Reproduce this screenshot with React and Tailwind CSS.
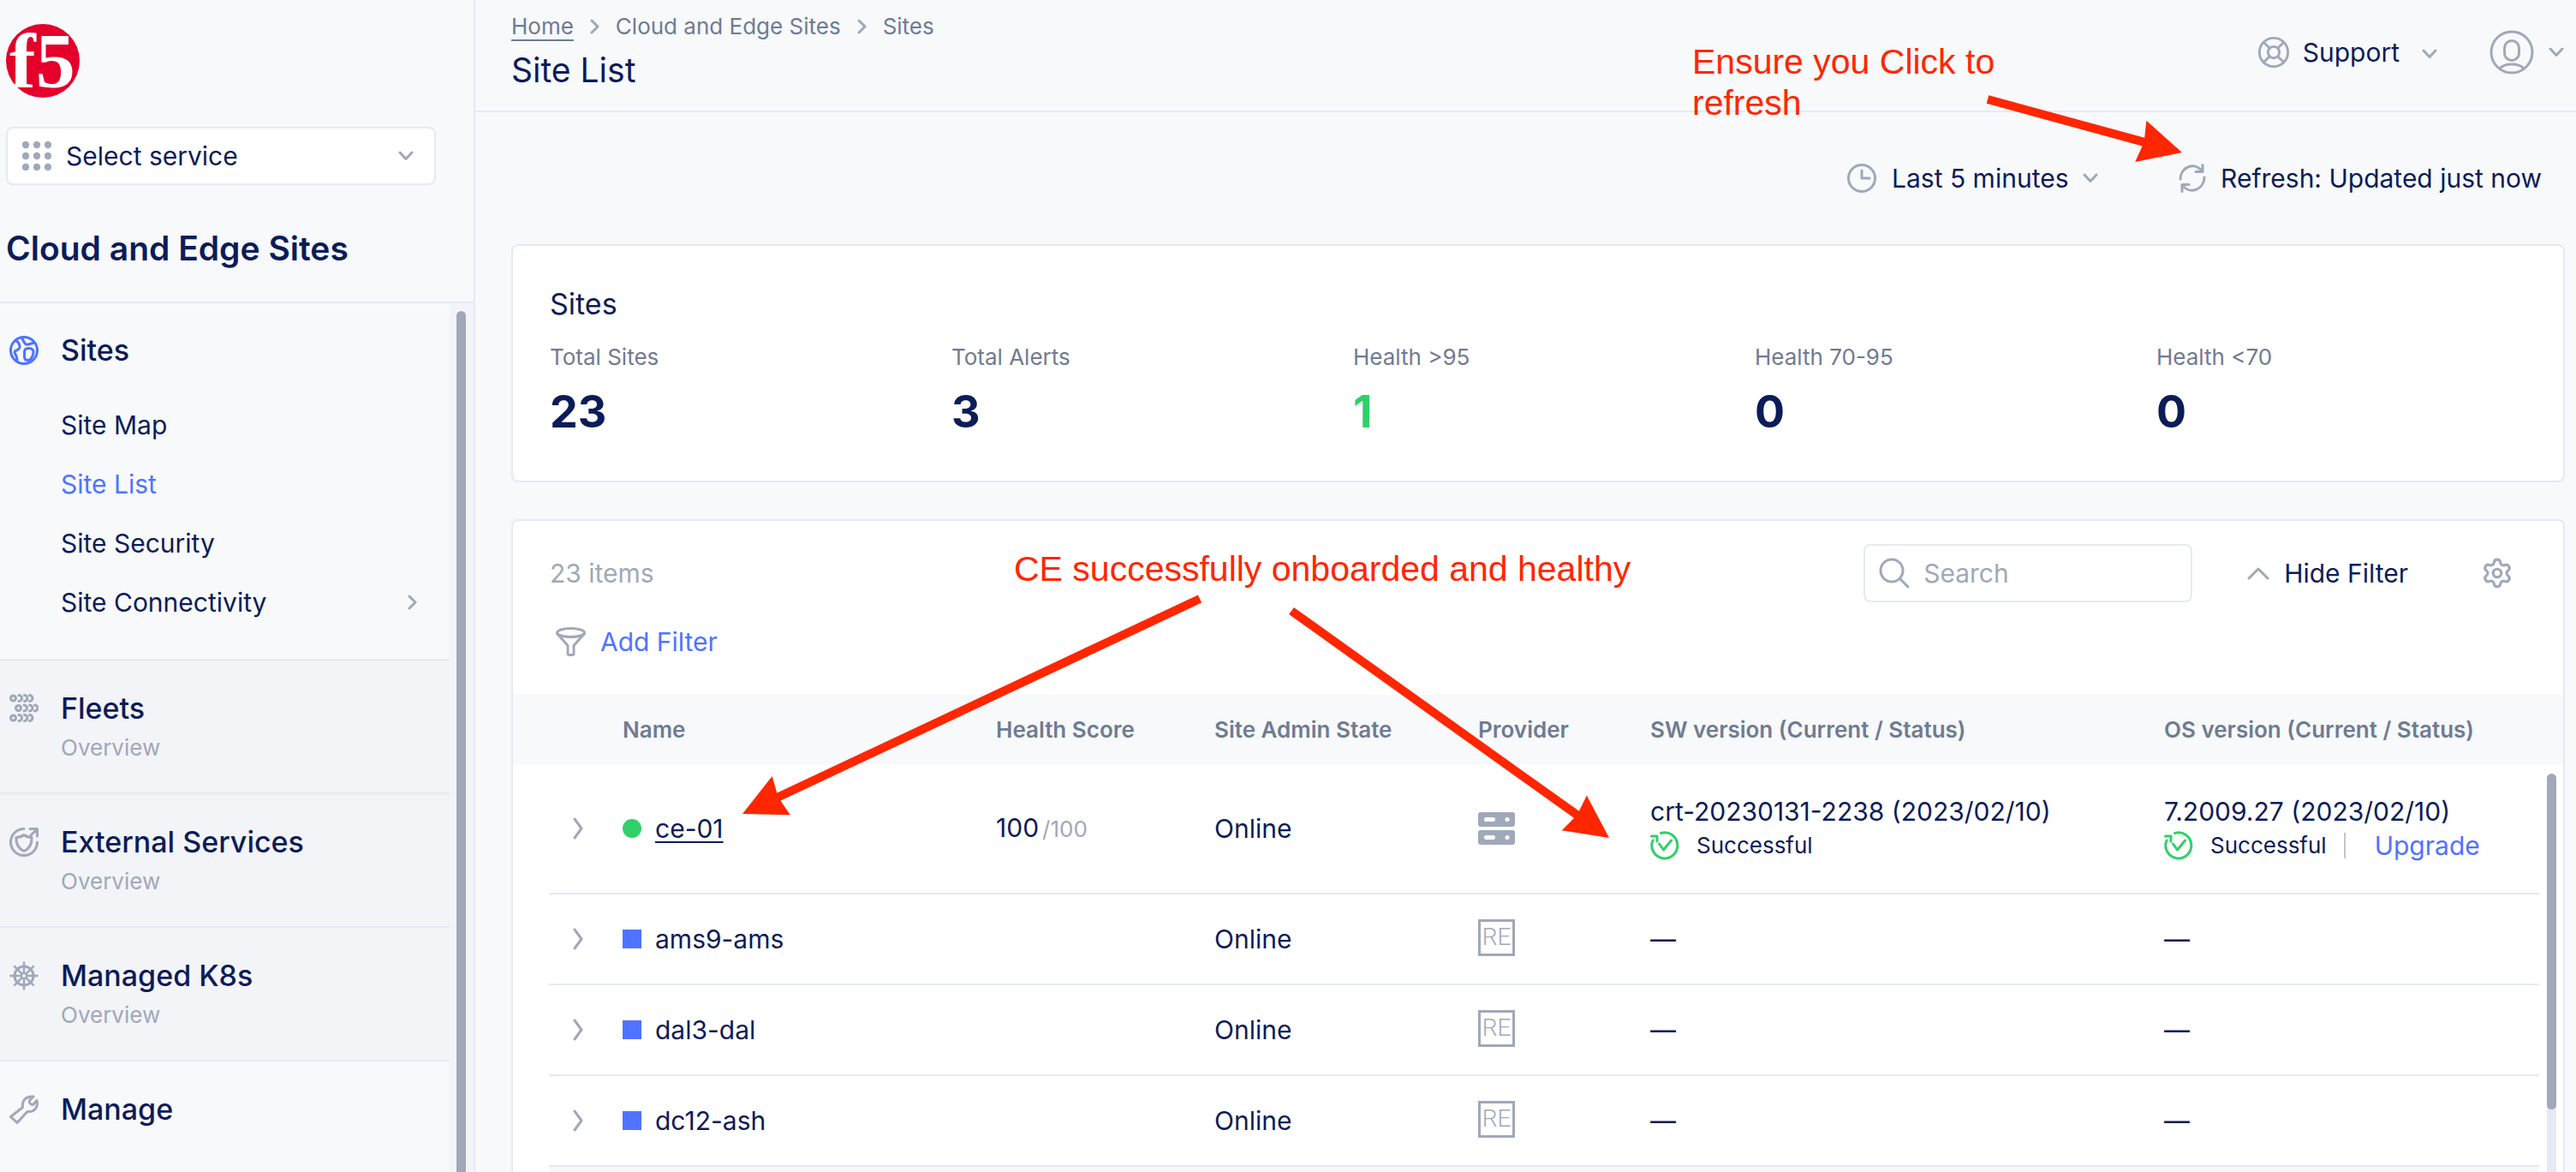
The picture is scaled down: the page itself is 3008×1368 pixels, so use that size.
import React from "react";
import clsx from "clsx";
import { LifeBuoy, Settings } from "lucide-react";

const SERVICES = [
    { title: "Fleets", icon: FleetIcon },
    { title: "External Services", icon: ExternalIcon },
    { title: "Managed K8s", icon: WheelIcon },
];

const SITE_LINKS = [
    { label: "Site Map" },
    { label: "Site List", active: true },
    { label: "Site Security" },
    { label: "Site Connectivity", nested: true },
];

const STATS = [
    { label: "Total Sites", value: 23 },
    { label: "Total Alerts", value: 3 },
    { label: "Health >95", value: 1, good: true },
    { label: "Health 70-95", value: 0 },
    { label: "Health <70", value: 0 },
];

const SITES = [
    {
        name: "ce-01",
        health: 100,
        state: "Online",
        sw: "crt-20230131-2238 (2023/02/10)",
        os: "7.2009.27 (2023/02/10)",
    },
    { name: "ams9-ams", state: "Online" },
    { name: "dal3-dal", state: "Online" },
    { name: "dc12-ash", state: "Online" },
];

function Icon({ w = 34, h = 34, className, children }) {
    return (
        <svg
            width={w}
            height={h}
            viewBox={`0 0 ${w} ${h}`}
            fill="none"
            stroke="currentColor"
            strokeWidth="3"
            strokeLinecap="round"
            strokeLinejoin="round"
            aria-hidden="true"
            className={clsx("shrink-0", className)}
        >
            {children}
        </svg>
    );
}

function ChevronDown({ className }) {
    return (
        <Icon w={18} h={12} className={clsx("text-[#a0a8b9]", className)}>
            <path d="M2 2l7 7.5L16 2" />
        </Icon>
    );
}

function ChevronRight({ className }) {
    return (
        <Icon w={11} h={18} className={clsx("text-[#a0a8b9]", className)}>
            <path d="M2 2l7 7-7 7" />
        </Icon>
    );
}

function Logo() {
    return (
        <svg width="86" height="86" viewBox="0 0 86 86" role="img" aria-label="f5" className="overflow-visible">
            <circle cx="43" cy="43" r="43" fill="#e4002b" />
            <text
                x="4"
                y="74"
                fontSize="92"
                fontWeight="700"
                fill="#fff"
                className="font-['Liberation_Serif',serif]"
            >
                f5
            </text>
        </svg>
    );
}

function DotsIcon() {
    return (
        <Icon className="text-[#a0a8b9]">
            {[4, 17, 30].map((y) => [4, 17, 30].map((x) => (
                <circle key={x + "-" + y} cx={x} cy={y} r="4.2" fill="currentColor" stroke="none" />
            )))}
        </Icon>
    );
}

function GlobeIcon() {
    return (
        <Icon className="text-[#4f73ff]">
            <circle cx="17" cy="17" r="15.5" />
            <path d="M7 5.500c3 1 4.500 3.500 5 6.500s-1.500 4-4 5-2.500 2.500-1 4.500 2 4.500 2 8" />
            <path d="M14.500 2.500l3 5.500c1 2 2.500 2.500 4.500 2l7-2" />
            <path d="M17.500 19c0-3 2-4.500 5-4.500s6 1.500 5.500 5-2.500 9-6 9-4.500-1.500-4.500-4z" />
        </Icon>
    );
}

function FleetIcon() {
    return (
        <Icon className="text-[#a0a8b9]">
            {[[0, 5], [6, 16.5], [0, 28]].map(([x, y]) => (
                <g key={y}>
                    <circle cx={x + 4.5} cy={y} r="3" />
                    <path d={`M${x + 11} ${y - 3.5}a3.500 3.500 0 0 1 0 7M${x + 17.5} ${y - 3.5}a3.500 3.500 0 0 1 0 7M${x + 23.5} ${y - 3.5}a3.500 3.500 0 0 1 0 7`} />
                </g>
            ))}
        </Icon>
    );
}

function ExternalIcon() {
    return (
        <Icon className="text-[#a0a8b9]">
            <path d="M17 1.500A15.500 15.500 0 1 0 32.500 17" />
            <path d="M24 1.500h8.500V10M32 2l-7 7" />
            <path d="M17 8.500c2.500 2 5 3 9 3 .500 8-2.500 13-9 16-6.500-3-9.500-8-9-16 4 0 6.500-1 9-3z" />
        </Icon>
    );
}

function WheelIcon() {
    return (
        <Icon className="text-[#a0a8b9]">
            <circle cx="17" cy="17" r="11" />
            <circle cx="17" cy="17" r="3" strokeWidth="2" />
            {[0, 45, 90, 135, 180, 225, 270, 315].map((a) => (
                <path key={a} d="M17 13.500V1.500" strokeWidth="2.500" transform={`rotate(${a} 17 17)`} />
            ))}
        </Icon>
    );
}

function WrenchIcon() {
    return (
        <Icon className="text-[#a0a8b9]">
            <path d="M1.500 25.500L15.500 14.500C14.500 7 19 1 28 2l-4.500 4.500c-.500 3 1 5 4 5l4.500-5c2 8-3 14-11 13L9 32.500z" />
        </Icon>
    );
}

function ServerIcon() {
    return (
        <Icon w={43} h={38} className="text-[#a0a8b9]">
            {[0, 21].map((y) => (
                <g key={y} stroke="none">
                    <rect y={y} width="43" height="17" rx="3" fill="currentColor" />
                    <rect x="7" y={y + 6} width="13" height="5" rx="2.500" fill="#fff" />
                    <circle cx="34" cy={y + 8.5} r="2.500" fill="#fff" />
                </g>
            ))}
        </Icon>
    );
}

function SuccessIcon() {
    return (
        <Icon className="text-[#30d068]">
            <path d="M12.500 2.500A15 15 0 1 1 3 11" />
            <path d="M1.500 6H8v6" />
            <path d="M10.500 15l5 7 9-11" />
        </Icon>
    );
}

function Status({ children }) {
    return (
        <div className="flex h-10 items-center gap-5">
            <SuccessIcon />
            <span className="text-[26px]">Successful</span>
            {children}
        </div>
    );
}

function Sidebar() {
    return (
        <aside className="flex w-[555px] shrink-0 flex-col border-r-2 border-[#e6e9f4]">
            <div className="border-b-2 border-[#e6e9f4] pt-7 pr-11 pb-[34px] pl-[7px]">
                <Logo />
                <div className="mt-[34px] flex h-[68px] items-center rounded-lg border-2 border-[#e6e9f4] bg-white pr-6 pl-[17px]">
                    <DotsIcon />
                    <select aria-label="Service" className="ml-[17px] grow appearance-none bg-transparent">
                        <option>Select service</option>
                    </select>
                    <ChevronDown />
                </div>
                <h2 className="mt-[46px] text-[39px] leading-[56px] font-semibold">Cloud and Edge Sites</h2>
            </div>
            <div className="flex min-h-0 grow">
                <nav className="grow overflow-hidden">
                    <div className="border-b-2 border-[#e6e9f4] pt-[31px] pb-8">
                        <div className="flex items-center gap-[26px] pl-[11px]">
                            <GlobeIcon />
                            <h3 className="text-[34px] leading-[48px] font-medium">Sites</h3>
                        </div>
                        <ul className="mt-7">
                            {SITE_LINKS.map((l) => (
                                <li key={l.label}>
                                    <a
                                        href="#"
                                        className={clsx("flex h-[69px] items-center justify-between pr-[38px] pl-[71px]", l.active && "text-[#4f73ff]")}
                                    >
                                        {l.label}
                                        {l.nested && <ChevronRight />}
                                    </a>
                                </li>
                            ))}
                        </ul>
                    </div>
                    {SERVICES.map(({ title, icon: SectionIcon }) => (
                        <a key={title} href="#" className="block border-b-2 border-[#e6e9f4] bg-[#f3f4f8] pt-8 pb-[34px]">
                            <span className="flex items-center gap-[26px] pl-[11px] text-[34px] leading-[48px] font-medium">
                                <SectionIcon />
                                {title}
                            </span>
                            <span className="mt-1 block pl-[71px] text-[26px] leading-9 text-[#a0a8b9]">Overview</span>
                        </a>
                    ))}
                    <a href="#" className="flex items-center gap-[26px] pt-8 pl-[11px] text-[34px] leading-[48px] font-medium">
                        <WrenchIcon />
                        Manage
                    </a>
                </nav>
                <div className="w-7 shrink-0 bg-[#f3f4fa] pt-[9px] pl-2">
                    <div className="h-full w-[11px] rounded-t-full bg-[#a0a8b9]" />
                </div>
            </div>
        </aside>
    );
}

function Header() {
    return (
        <header className="flex h-[131px] shrink-0 justify-between border-b-2 border-[#e6e9f4] pr-3.5 pl-[42px]">
            <div className="pt-[13px]">
                <nav aria-label="Breadcrumb" className="flex items-center gap-[19px] text-[26px] leading-9 text-[#6f7b92]">
                    <a href="#" className="underline decoration-2 underline-offset-6">Home</a>
                    <ChevronRight />
                    <a href="#">Cloud and Edge Sites</a>
                    <ChevronRight />
                    <span>Sites</span>
                </nav>
                <h1 className="mt-[9px] text-[39px] leading-[48px]">Site List</h1>
            </div>
            <div className="flex h-[122px] items-center">
                <button type="button" className="flex items-center">
                    <LifeBuoy size={40} strokeWidth={1.75} className="text-[#a0a8b9]" />
                    <span className="mr-[26px] ml-3.5">Support</span>
                    <ChevronDown className="mt-1" />
                </button>
                <button type="button" aria-label="Account" className="ml-[61px] flex items-center gap-[17px]">
                    <Icon w={52} h={52} className="text-[#a0a8b9]">
                        <circle cx="26" cy="26" r="24" />
                        <rect x="17.500" y="12.500" width="17" height="23" rx="8.500" />
                        <path d="M12 45c3-3.500 8-5 14-5s11 1.500 14 5" />
                    </Icon>
                    <ChevronDown />
                </button>
            </div>
        </header>
    );
}

function TimeBar() {
    return (
        <div className="flex h-[154px] shrink-0 items-center justify-end pr-10">
            <Icon className="mr-[18px] text-[#a0a8b9]">
                <circle cx="17" cy="17" r="15.500" />
                <path d="M17 8v9h9" />
            </Icon>
            <select aria-label="Time range" className="mr-4 appearance-none bg-transparent">
                <option>Last 5 minutes</option>
            </select>
            <ChevronDown />
            <button type="button" className="ml-[94px] flex items-center gap-[17px]">
                <Icon w={32} className="text-[#a0a8b9]">
                    <path d="M2 18C2 4 19-3 27.500 9M28 1.500V9.500H20" />
                    <path d="M30 16C30 30 13 37 4.500 25M4 32.500V24.500H12" />
                </Icon>
                Refresh: Updated just now
            </button>
        </div>
    );
}

function Stats() {
    return (
        <section className="mr-[13px] ml-[42px] shrink-0 rounded-lg border-2 border-[#e6e9f4] bg-white pt-11 pr-1.5 pb-12 pl-[43px]">
            <h2 className="text-[34px] leading-[48px]">Sites</h2>
            <dl className="mt-[18px] grid grid-cols-5">
                {STATS.map((s) => (
                    <div key={s.label}>
                        <dt className="text-[26px] leading-10 text-[#6f7b92]">{s.label}</dt>
                        <dd className={clsx("mt-3 text-[52px] leading-[64px] font-bold", s.good && "text-[#30d068]")}>{s.value}</dd>
                    </div>
                ))}
            </dl>
        </section>
    );
}

function Toolbar() {
    return (
        <div className="pt-[27px] pb-7 pl-[43px]">
            <div className="flex items-center pr-[58px]">
                <span className="grow text-[#a0a8b9]">23 items</span>
                <label className="flex h-[68px] w-96 items-center gap-4 rounded-lg border-2 border-[#e6e9f4] px-4">
                    <Icon w={36} h={36} className="text-[#a0a8b9]">
                        <circle cx="15" cy="15" r="13" />
                        <path d="M24.500 24.500L34 34" />
                    </Icon>
                    <input type="search" aria-label="Search" placeholder="Search" className="w-full min-w-0 outline-none placeholder:text-[#a0a8b9]" />
                </label>
                <button type="button" className="ml-16 flex items-center gap-[17px]">
                    <Icon w={26} h={15} className="text-[#a0a8b9]">
                        <path d="M2 13L13 2l11 11" />
                    </Icon>
                    Hide Filter
                </button>
                <button type="button" aria-label="Table settings" className="ml-[85px] text-[#a0a8b9]">
                    <Settings size={38} strokeWidth={2} />
                </button>
            </div>
            <button type="button" className="mt-3 ml-[7px] flex h-[68px] items-center gap-[17px] text-[#4f73ff]">
                <Icon w={35} className="text-[#a0a8b9]">
                    <ellipse cx="17.500" cy="6.500" rx="16" ry="5" />
                    <path d="M1.500 7.500L14 21.500V30.500q0 2 2 2h3q2 0 2-2v-9L33.500 7.500" />
                </Icon>
                Add Filter
            </button>
        </div>
    );
}

function SiteRow({ site }) {
    const customer = Boolean(site.sw);
    const cell = "border-b-2 border-[#e6e9f4]";
    return (
        <tr className={customer ? "h-[151px]" : "h-[106px]"}>
            <td />
            <td className={clsx(cell, "pl-7")}>
                <button type="button" aria-label={"Expand " + site.name} className="block">
                    <Icon w={13} h={26} className="text-[#a0a8b9]">
                        <path d="M2 2l8 11-8 11" />
                    </Icon>
                </button>
            </td>
            <td className={cell}>
                <span className="flex items-center gap-4">
                    <span className={clsx("size-[22px]", customer ? "rounded-full bg-[#30d068]" : "bg-[#4f73ff]")} />
                    <a href="#" className={clsx(customer && "underline decoration-2 underline-offset-4")}>{site.name}</a>
                </span>
            </td>
            <td className={cell}>
                {site.health && (
                    <>
                        {site.health}
                        <span className="ml-1 text-[26px] text-[#a0a8b9]">/100</span>
                    </>
                )}
            </td>
            <td className={cell}>{site.state}</td>
            <td className={cell}>
                {customer ? (
                    <ServerIcon />
                ) : (
                    <span className="mb-1 flex size-[43px] items-center justify-center border-3 border-[#a0a8b9] font-['Roboto',sans-serif] text-[28px] font-light text-[#a0a8b9]">
                        RE
                    </span>
                )}
            </td>
            <td className={cell}>
                {customer ? (
                    <>
                        <div className="h-10 leading-10">{site.sw}</div>
                        <Status />
                    </>
                ) : "—"}
            </td>
            <td className={cell}>
                {customer ? (
                    <>
                        <div className="h-10 leading-10">{site.os}</div>
                        <Status>
                            <span className="h-[30px] w-0.5 bg-[#c0c5d0]" />
                            <a href="#" className="ml-3.5 text-[#4f73ff]">Upgrade</a>
                        </Status>
                    </>
                ) : "—"}
            </td>
            <td />
        </tr>
    );
}

function SiteTable() {
    return (
        <section className="mt-[43px] mr-[13px] ml-[42px] min-h-0 grow overflow-hidden rounded-t-lg border-2 border-b-0 border-[#e6e9f4] bg-white">
            <Toolbar />
            <div className="relative">
                <table className="w-full table-fixed text-left whitespace-nowrap">
                    <colgroup>
                        <col className="w-[42px]" />
                        <col className="w-[86px]" />
                        <col className="w-[436px]" />
                        <col className="w-[255px]" />
                        <col className="w-[308px]" />
                        <col className="w-[201px]" />
                        <col className="w-[600px]" />
                        <col />
                        <col className="w-7" />
                    </colgroup>
                    <thead className="bg-[#f7f9fb] text-[26px] text-[#6f7b92]">
                        <tr className="h-[81px]">
                            <td />
                            <td />
                            <th className="font-semibold">Name</th>
                            <th className="font-semibold">Health Score</th>
                            <th className="font-semibold">Site Admin State</th>
                            <th className="font-semibold">Provider</th>
                            <th className="font-semibold">SW version (Current / Status)</th>
                            <th className="font-semibold">OS version (Current / Status)</th>
                            <td />
                        </tr>
                    </thead>
                    <tbody>
                        {SITES.map((site) => <SiteRow key={site.name} site={site} />)}
                        <tr className="h-[106px]">
                            <td />
                            <td colSpan={7} className="bg-[#f7f8fa]" />
                            <td />
                        </tr>
                    </tbody>
                </table>
                <div className="absolute top-[92px] right-2 bottom-0 w-[11px] rounded-t-full bg-[#e6e9f4]">
                    <div className="h-[392px] rounded-full bg-[#a0a8b9]" />
                </div>
            </div>
        </section>
    );
}

// Arrow from (x1, y1) to (x2, y2) with a solid head at the end
function Arrow({ x1, y1, x2, y2 }) {
    const len = Math.hypot(x2 - x1, y2 - y1);
    const angle = (Math.atan2(y2 - y1, x2 - x1) * 180) / Math.PI;
    return (
        <g transform={`translate(${x1} ${y1}) rotate(${angle})`} fill="#ff2600">
            <path d={`M0-5H${len - 44}V5H0z`} />
            <path d={`M${len} 0L${len - 50}-25L${len - 46} 0L${len - 50} 25z`} />
        </g>
    );
}

function Annotations() {
    return (
        <div className="pointer-events-none absolute inset-0 font-['Liberation_Sans',sans-serif] text-[41px] leading-[48px] text-[#ff2600]">
            <p className="absolute top-12 left-[1976px] w-[380px]">Ensure you Click to refresh</p>
            <p className="absolute top-[640px] left-[1184px] whitespace-nowrap">CE successfully onboarded and healthy</p>
            <svg width="100%" height="100%" className="absolute inset-0" aria-hidden="true">
                <Arrow x1={2321} y1={116} x2={2548} y2={178} />
                <Arrow x1={1401} y1={699} x2={867} y2={950} />
                <Arrow x1={1508} y1={713} x2={1879} y2={978} />
            </svg>
        </div>
    );
}

export default function App() {
    return (
        <div className="relative flex h-screen overflow-hidden bg-[#f7f9fb] font-['Inter',sans-serif] text-[30px] leading-10 text-[#0c1c58]">
            <Sidebar />
            <main className="flex min-w-0 grow flex-col">
                <Header />
                <TimeBar />
                <Stats />
                <SiteTable />
            </main>
            <Annotations />
        </div>
    );
}
